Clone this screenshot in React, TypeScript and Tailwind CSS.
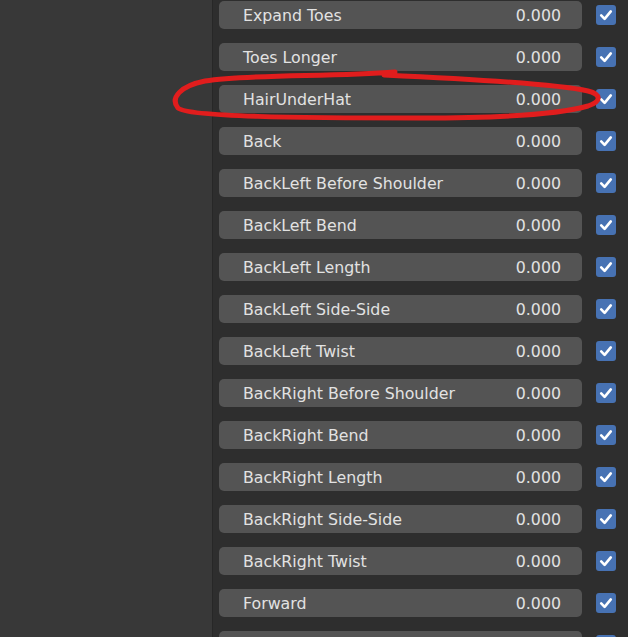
import React from 'react'

const ROWS = [
  'Expand Toes',
  'Toes Longer',
  'HairUnderHat',
  'Back',
  'BackLeft Before Shoulder',
  'BackLeft Bend',
  'BackLeft Length',
  'BackLeft Side-Side',
  'BackLeft Twist',
  'BackRight Before Shoulder',
  'BackRight Bend',
  'BackRight Length',
  'BackRight Side-Side',
  'BackRight Twist',
  'Forward',
  '',
]

function Checkbox() {
  return (
    <div className="w-5 h-5 rounded-[3px] bg-[#4772b3] flex items-center justify-center shrink-0">
      <svg width="20" height="20" viewBox="0 0 20 20">
        <path d="M5.2 10.4 L8.6 13.8 L14.8 6.4" fill="none" stroke="#ffffff" strokeWidth="2.6" strokeLinecap="round" strokeLinejoin="round" />
      </svg>
    </div>
  )
}

function Row({ label }: { label: string }) {
  return (
    <div className="flex items-center gap-[14px] h-7 shrink-0">
      <div className="w-[363px] h-7 rounded-[5px] bg-[#545454] flex items-center justify-between pl-6 pr-[21px] pt-[2px] text-[15.8px] text-[#e2e2e2]">
        <span>{label}</span>
        {label && <span>0.000</span>}
      </div>
      <Checkbox />
    </div>
  )
}

export default function App() {
  return (
    <div
      className="relative flex w-[628px] h-[637px] overflow-hidden bg-[#2e2e2e]"
      style={{ fontFamily: '"DejaVu Sans", Verdana, sans-serif' }}
    >
      <div className="w-[212px] h-full bg-[#383838] shrink-0" />
      <div className="w-px h-full bg-[#272727] shrink-0" />
      <div className="flex flex-col gap-[14px] pt-px pl-[6px]">
        {ROWS.map((r, i) => (
          <Row key={i} label={r} />
        ))}
      </div>

      {/* red marker annotation */}
      <svg className="absolute left-0 top-0 pointer-events-none" width="628" height="637">
        <path
          d="M395 72 C330 77, 250 74, 205 81 C180 86, 170 98, 178 108 C188 117, 300 118, 420 118 C500 118, 560 114, 588 106 C603 101, 600 94, 588 91 C560 85, 470 79, 384 75"
          fill="none"
          stroke="#e11d1d"
          strokeWidth="5"
          strokeLinecap="round"
          strokeLinejoin="round"
        />
      </svg>
    </div>
  )
}
